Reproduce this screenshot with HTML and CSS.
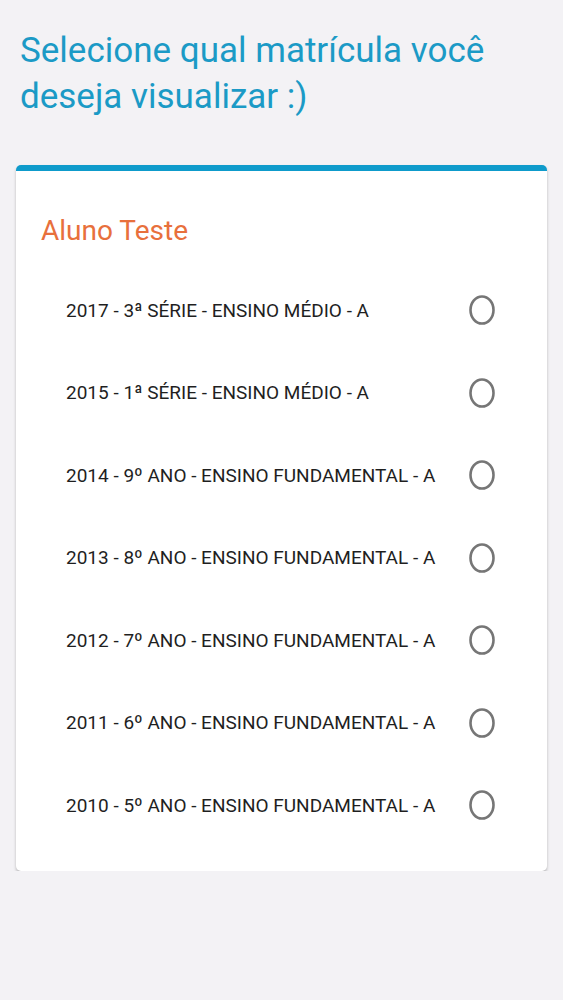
FILE: index.html
```html
<!DOCTYPE html>
<html lang="pt-BR">
<head>
<meta charset="utf-8">
<link rel="stylesheet" href="styles.css">
</head>
<body>
<main class="page">
  <h1 class="title">Selecione qual matrícula você deseja visualizar :)</h1>
  <section class="card">
    <h2 class="student">Aluno Teste</h2>
    <ul class="list">
      <li class="row"><span class="label">2017 - 3ª SÉRIE - ENSINO MÉDIO - A</span><svg class="radio" viewBox="0 0 26 30"><ellipse cx="13" cy="15" rx="11.5" ry="13.5"/></svg></li>
      <li class="row"><span class="label">2015 - 1ª SÉRIE - ENSINO MÉDIO - A</span><svg class="radio" viewBox="0 0 26 30"><ellipse cx="13" cy="15" rx="11.5" ry="13.5"/></svg></li>
      <li class="row"><span class="label">2014 - 9º ANO - ENSINO FUNDAMENTAL - A</span><svg class="radio" viewBox="0 0 26 30"><ellipse cx="13" cy="15" rx="11.5" ry="13.5"/></svg></li>
      <li class="row"><span class="label">2013 - 8º ANO - ENSINO FUNDAMENTAL - A</span><svg class="radio" viewBox="0 0 26 30"><ellipse cx="13" cy="15" rx="11.5" ry="13.5"/></svg></li>
      <li class="row"><span class="label">2012 - 7º ANO - ENSINO FUNDAMENTAL - A</span><svg class="radio" viewBox="0 0 26 30"><ellipse cx="13" cy="15" rx="11.5" ry="13.5"/></svg></li>
      <li class="row"><span class="label">2011 - 6º ANO - ENSINO FUNDAMENTAL - A</span><svg class="radio" viewBox="0 0 26 30"><ellipse cx="13" cy="15" rx="11.5" ry="13.5"/></svg></li>
      <li class="row"><span class="label">2010 - 5º ANO - ENSINO FUNDAMENTAL - A</span><svg class="radio" viewBox="0 0 26 30"><ellipse cx="13" cy="15" rx="11.5" ry="13.5"/></svg></li>
    </ul>
  </section>
</main>
</body>
</html>
```
FILE: styles.css
```css
html, body {
  margin: 0;
  padding: 0;
  background: #f3f2f5;
}
body {
  font-family: "Roboto", "Liberation Sans", sans-serif;
}
.page {
  padding: 28px 16px 0 16px;
}
.title {
  margin: 0 0 0 4px;
  font-size: 35px;
  line-height: 46px;
  font-weight: 400;
  color: #1b9ac6;
}
.card {
  margin-top: 45px;
  background: #fff;
  border-top: 6px solid #0e9bcb;
  border-radius: 5px;
  box-shadow: 0 2px 3px rgba(0,0,0,0.25);
  padding: 45px 0 24px 25px;
}
.student {
  margin: 0;
  font-size: 28px;
  line-height: 30px;
  font-weight: 400;
  color: #e8703c;
}
.list {
  list-style: none;
  margin: 23px 0 0 0;
  padding: 0 52px 0 25px;
}
.row {
  display: flex;
  align-items: center;
  justify-content: space-between;
  height: 82.5px;
}
.label {
  font-size: 19px;
  color: #1f1f1f;
}
.radio {
  width: 26px;
  height: 30px;
  fill: none;
  stroke: #767676;
  stroke-width: 2.6;
}
```
